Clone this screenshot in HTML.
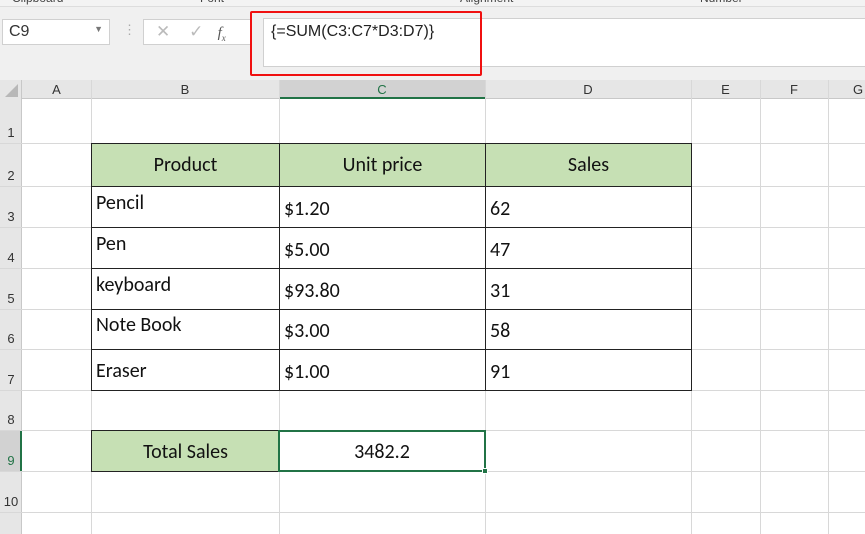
<!DOCTYPE html>
<html><head><style>
*{margin:0;padding:0;box-sizing:border-box}
body{width:865px;height:534px;position:relative;background:#fff;font-family:"Liberation Sans",sans-serif;overflow:hidden}
.a{position:absolute}
.gv{position:absolute;top:80px;bottom:0;width:1px;background:#d8d8d8}
.gh{position:absolute;left:0;right:0;height:1px;background:#d8d8d8}
.rh{position:absolute;left:0;width:22px;font-size:13px;color:#333;text-align:center}
.ch{position:absolute;top:80px;height:19px;font-size:13px;color:#333;text-align:center;line-height:19px}
.c{position:absolute;border:1px solid #222;font-family:"Carlito","Liberation Sans",sans-serif;font-size:20px;color:#111;padding-left:4px}
.g{background:#c6e0b4;text-align:center;padding:0}
.rl{position:absolute;top:-9px;font-size:12px;color:#444}
</style></head><body>
<div class="a" style="left:0;top:0;width:865px;height:7px;background:#f3f3f3;border-bottom:1px solid #ddd"></div>
<div class="rl" style="left:12px">Clipboard</div><div class="rl" style="left:200px">Font</div><div class="rl" style="left:460px">Alignment</div><div class="rl" style="left:700px">Number</div>
<div class="a" style="left:0;top:7px;width:865px;height:73px;background:#f0f0f0"></div>
<div class="a" style="left:2px;top:19px;width:108px;height:26px;background:#fff;border:1px solid #d0d0d0;font-size:16px;color:#333;padding:3px 6px">C9<span style="position:absolute;right:6px;top:4px;font-size:9px;color:#777">▼</span></div>
<div class="a" style="left:123px;top:22px;color:#aaa;font-size:13px">⋮</div>
<div class="a" style="left:143px;top:19px;width:108px;height:26px;background:#fff;border:1px solid #d0d0d0;color:#bbb;font-size:17px;padding:2px 0 0 12px">✕&nbsp;&nbsp;&nbsp;&nbsp;✓&nbsp;&nbsp;&nbsp;<i style="color:#555;font-family:'Liberation Serif';font-size:15px">f<sub style="font-size:9px">x</sub></i></div>
<div class="a" style="left:263px;top:18px;width:602px;height:49px;background:#fff;border-top:1px solid #d0d0d0;border-bottom:1px solid #d0d0d0;border-left:1px solid #d0d0d0"></div>
<div class="a" style="left:271px;top:23px;font-size:16px;color:#222">{=SUM(C3:C7*D3:D7)}</div>
<div class="a" style="left:250px;top:11px;width:232px;height:65px;border:2px solid #f01010;border-radius:2px"></div>
<div class="a" style="left:0;top:80px;width:865px;height:19px;background:#e6e6e6;border-bottom:1px solid #c8c8c8"></div>
<div class="a" style="left:0;top:80px;width:22px;height:454px;background:#e6e6e6;border-right:1px solid #c8c8c8"></div>
<div class="a" style="left:279px;top:80px;width:206px;height:19px;background:#d2d2d2;border-bottom:2px solid #217346"></div>
<div class="a" style="left:0;top:430px;width:22px;height:41px;background:#d2d2d2;border-right:2px solid #217346"></div>
<div class="a" style="left:5px;top:84px;width:0;height:0;border-left:13px solid transparent;border-bottom:13px solid #b8b8b8"></div>
<div class="ch" style="left:22px;width:69px">A</div>
<div class="ch" style="left:91px;width:188px">B</div>
<div class="ch" style="left:279px;width:206px;color:#217346">C</div>
<div class="ch" style="left:485px;width:206px">D</div>
<div class="ch" style="left:691px;width:69px">E</div>
<div class="ch" style="left:760px;width:68px">F</div>
<div class="ch" style="left:828px;width:60px">G</div>
<div class="gv" style="left:91px"></div><div class="gv" style="left:279px"></div><div class="gv" style="left:485px"></div><div class="gv" style="left:691px"></div><div class="gv" style="left:760px"></div><div class="gv" style="left:828px"></div>
<div class="gh" style="top:143px"></div><div class="gh" style="top:186px"></div><div class="gh" style="top:227px"></div><div class="gh" style="top:268px"></div><div class="gh" style="top:309px"></div><div class="gh" style="top:349px"></div><div class="gh" style="top:390px"></div><div class="gh" style="top:430px"></div><div class="gh" style="top:471px"></div><div class="gh" style="top:512px"></div>
<div class="rh" style="top:125px">1</div><div class="rh" style="top:168px">2</div><div class="rh" style="top:209px">3</div><div class="rh" style="top:250px">4</div><div class="rh" style="top:291px">5</div><div class="rh" style="top:331px">6</div><div class="rh" style="top:372px">7</div><div class="rh" style="top:412px">8</div><div class="rh" style="top:453px;color:#217346">9</div><div class="rh" style="top:494px">10</div>
<div class="c g" style="left:91px;top:143px;width:189px;height:44px;line-height:42px">Product</div>
<div class="c g" style="left:279px;top:143px;width:207px;height:44px;line-height:42px">Unit price</div>
<div class="c g" style="left:485px;top:143px;width:207px;height:44px;line-height:42px">Sales</div>
<div class="c" style="left:91px;top:186px;width:189px;height:42px;line-height:32px">Pencil</div>
<div class="c" style="left:279px;top:186px;width:207px;height:42px;line-height:44px">$1.20</div>
<div class="c" style="left:485px;top:186px;width:207px;height:42px;line-height:44px">62</div>
<div class="c" style="left:91px;top:227px;width:189px;height:42px;line-height:32px">Pen</div>
<div class="c" style="left:279px;top:227px;width:207px;height:42px;line-height:44px">$5.00</div>
<div class="c" style="left:485px;top:227px;width:207px;height:42px;line-height:44px">47</div>
<div class="c" style="left:91px;top:268px;width:189px;height:42px;line-height:32px">keyboard</div>
<div class="c" style="left:279px;top:268px;width:207px;height:42px;line-height:44px">$93.80</div>
<div class="c" style="left:485px;top:268px;width:207px;height:42px;line-height:44px">31</div>
<div class="c" style="left:91px;top:309px;width:189px;height:41px;line-height:31px">Note Book</div>
<div class="c" style="left:279px;top:309px;width:207px;height:41px;line-height:43px">$3.00</div>
<div class="c" style="left:485px;top:309px;width:207px;height:41px;line-height:43px">58</div>
<div class="c" style="left:91px;top:349px;width:189px;height:42px;line-height:42px">Eraser</div>
<div class="c" style="left:279px;top:349px;width:207px;height:42px;line-height:44px">$1.00</div>
<div class="c" style="left:485px;top:349px;width:207px;height:42px;line-height:44px">91</div>
<div class="c g" style="left:91px;top:430px;width:189px;height:42px;line-height:42px">Total Sales</div>
<div class="c" style="left:278px;top:430px;width:208px;height:42px;line-height:40px;border:2px solid #217346;text-align:center;padding:0">3482.2</div>
<div class="a" style="left:482px;top:468px;width:6px;height:6px;background:#217346;border:1px solid #fff"></div>
</body></html>
